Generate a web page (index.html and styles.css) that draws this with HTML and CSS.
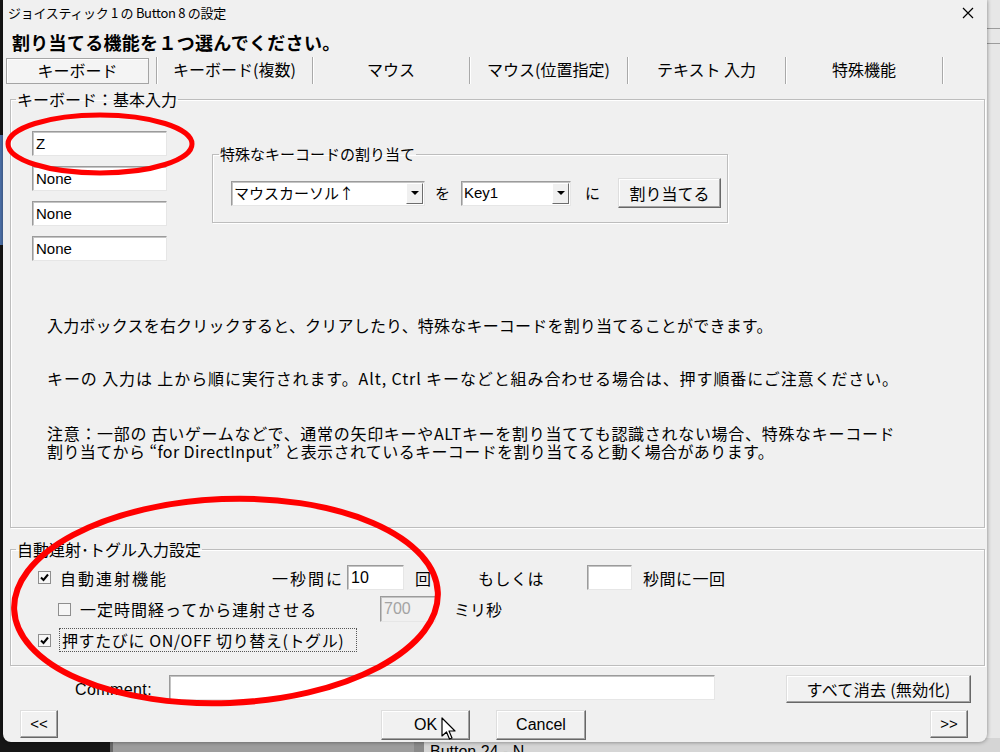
FILE: index.html
```html
<!DOCTYPE html>
<html lang="ja">
<head>
<meta charset="utf-8">
<title>ジョイスティック 1 の Button 8 の設定</title>
<link rel="stylesheet" href="styles.css">
</head>
<body>
<div class="desktop">
  <div class="bg-blue"></div>
  <div class="bg-right"><div class="bg-line l1"></div><div class="bg-line l2"></div></div>
  <div class="bg-bottom"></div>
  <div class="bg-win2"><span>Button 24 - N</span></div>

  <div class="dialog">
    <div class="titlebar">
      <span class="title">ジョイスティック 1 の Button 8 の設定</span>
      <svg class="close" width="12" height="12" viewBox="0 0 12 12"><path d="M1 1 L11 11 M11 1 L1 11" stroke="#000" stroke-width="1.2" fill="none"/></svg>
    </div>
    <h1 class="heading">割り当てる機能を１つ選んでください。</h1>
    <div class="tabs">
      <div class="tab active"><span class="tab-box">キーボード</span></div>
      <div class="tab">キーボード(複数)</div>
      <div class="tab">マウス</div>
      <div class="tab">マウス(位置指定)</div>
      <div class="tab">テキスト 入力</div>
      <div class="tab">特殊機能</div>
    </div>

    <fieldset class="group basic">
      <legend>キーボード：基本入力</legend>
      <div class="basic-inner">
        <div class="basic-top">
          <div class="keys">
            <div class="textbox">Z</div>
            <div class="textbox">None</div>
            <div class="textbox">None</div>
            <div class="textbox">None</div>
          </div>
          <fieldset class="group special">
            <legend>特殊なキーコードの割り当て</legend>
            <div class="special-row">
              <div class="combo combo-wide"><span>マウスカーソル↑</span><span class="drop"><i></i></span></div>
              <span class="word w-wo">を</span>
              <div class="combo combo-narrow"><span>Key1</span><span class="drop"><i></i></span></div>
              <span class="word w-ni">に</span>
              <div class="button btn-assign">割り当てる</div>
            </div>
          </fieldset>
        </div>
        <div class="notes">
          <p class="note n1">入力ボックスを右クリックすると、クリアしたり、特殊なキーコードを割り当てることができます。</p>
          <p class="note n2">キーの 入力は 上から順に実行されます。Alt, Ctrl キーなどと組み合わせる場合は、押す順番にご注意ください。</p>
          <p class="note n3"><span class="n3a">注意：一部の 古いゲームなどで、通常の矢印キーやALTキーを割り当てても認識されない場合、特殊なキーコード</span><span class="n3b">割り当てから “for DirectInput” と表示されているキーコードを割り当てると動く場合があります。</span></p>
        </div>
      </div>
    </fieldset>

    <fieldset class="group auto">
      <legend>自動連射･トグル入力設定</legend>
      <div class="auto-inner">
        <div class="row r1">
          <span class="check on"><svg width="11" height="11" viewBox="0 0 11 11"><path d="M2 5.5 L4.5 8 L9 2.5" stroke="#000" stroke-width="2" fill="none"/></svg></span>
          <span class="lbl lbl-auto">自動連射機能</span>
          <span class="lbl lbl-persec">一秒間に</span>
          <div class="textbox tb-rate">10</div>
          <span class="lbl lbl-kai">回</span>
          <span class="lbl lbl-or">もしくは</span>
          <div class="textbox tb-sec"></div>
          <span class="lbl lbl-once">秒間に一回</span>
        </div>
        <div class="row r2">
          <span class="check"></span>
          <span class="lbl lbl-delay">一定時間経ってから連射させる</span>
          <div class="textbox tb-ms disabled">700</div>
          <span class="lbl lbl-ms">ミリ秒</span>
        </div>
        <div class="row r3">
          <span class="check on"><svg width="11" height="11" viewBox="0 0 11 11"><path d="M2 5.5 L4.5 8 L9 2.5" stroke="#000" stroke-width="2" fill="none"/></svg></span>
          <span class="lbl lbl-toggle">押すたびに ON/OFF 切り替え(トグル)</span>
        </div>
      </div>
    </fieldset>

    <div class="comment-row">
      <span class="comment-label">Comment:</span>
      <div class="textbox tb-comment"></div>
      <div class="button btn-clear">すべて消去 (無効化)</div>
    </div>
    <div class="button-row">
      <div class="button btn-prev">&lt;&lt;</div>
      <div class="button btn-ok">OK</div>
      <div class="button btn-cancel">Cancel</div>
      <div class="button btn-next">&gt;&gt;</div>
    </div>
  </div>

  <svg class="annot" width="1000" height="752" viewBox="0 0 1000 752">
    <ellipse cx="100" cy="144" rx="92" ry="29" fill="none" stroke="#f00" stroke-width="5"/>
    <ellipse cx="226" cy="601" rx="212" ry="102" fill="none" stroke="#f00" stroke-width="6" transform="rotate(-2.3 226 601)"/>
  </svg>
  <svg class="cursor" width="16" height="26" viewBox="0 0 16 26">
    <path d="M1 1 L1 19 L5.5 15 L8.5 22 L11 21 L8 14 L14 14 Z" fill="#fff" stroke="#000" stroke-width="1.2" stroke-linejoin="round"/>
  </svg>
</div>
</body>
</html>
```

FILE: styles.css
```css
html, body {
  margin: 0;
  padding: 0;
}
body {
  background: #161616;
  font-family: "Noto Sans CJK JP", "Noto Sans", sans-serif;
  color: #000;
  overflow: hidden;
}
.desktop {
  position: relative;
  width: 1000px;
  height: 752px;
  overflow: hidden;
}

/* background windows */
.bg-blue {
  position: absolute;
  left: 0;
  top: 135px;
  width: 4px;
  height: 110px;
  background: #4f74ad;
}
.bg-right {
  position: absolute;
  left: 985px;
  top: 0;
  width: 15px;
  height: 752px;
  background: #e7e7e7;
}
.bg-line {
  position: absolute;
  left: 0;
  right: 0;
  height: 1px;
  background: #9c9c9c;
}
.bg-line.l1 { top: 28px; }
.bg-line.l2 { top: 43px; }
.bg-bottom {
  position: absolute;
  left: 110px;
  top: 738px;
  width: 890px;
  height: 14px;
  background: #9d9d9d;
  border-left: 3px solid #6a6a6a;
}
.bg-win2 {
  position: absolute;
  left: 414px;
  top: 738px;
  width: 586px;
  height: 14px;
  background: #d5d5d5;
  border-left: 10px solid #8a8a8a;
  overflow: hidden;
}
.bg-win2 span {
  position: absolute;
  left: 6px;
  top: 5px;
  font-family: "Liberation Sans", sans-serif;
  font-size: 16px;
  line-height: 18px;
  white-space: nowrap;
}

/* dialog */
.dialog {
  position: absolute;
  left: 3px;
  top: 0;
  width: 984px;
  height: 742px;
  background: #f0f0f0;
  border-radius: 0 0 8px 8px;
  box-shadow: 0 0 4px rgba(0, 0, 0, 0.45);
  display: flex;
  flex-direction: column;
  font-size: 15px;
}
.titlebar {
  height: 26px;
  display: flex;
  align-items: center;
  justify-content: space-between;
  padding: 0 13px 0 5px;
  flex: none;
}
.title {
  font-size: 13px;
  line-height: 16px;
  letter-spacing: -0.3px;
}
.heading {
  margin: 6px 0 0 9px;
  font-size: 18px;
  line-height: 20px;
  font-weight: bold;
  height: 20px;
  letter-spacing: 0.3px;
  flex: none;
}

/* tabs */
.tabs {
  display: flex;
  height: 27px;
  margin-top: 5px;
  padding-left: 3px;
  flex: none;
}
.tab {
  flex: none;
  display: flex;
  align-items: center;
  justify-content: center;
  font-size: 16px;
  line-height: 20px;
  padding-bottom: 3px;
  border-right: 1px solid #a9a9a9;
  box-shadow: 1px 0 0 #fff;
  box-sizing: border-box;
}
.tab:nth-child(1) { width: 151px; justify-content: flex-start; padding-bottom: 0; }
.tab:nth-child(2) { width: 156px; }
.tab:nth-child(3) { width: 157px; }
.tab:nth-child(4) { width: 158px; }
.tab:nth-child(5) { width: 158px; }
.tab:nth-child(6) { width: 157px; }
.tab-box {
  width: 143px;
  height: 26px;
  box-sizing: border-box;
  display: flex;
  align-items: center;
  justify-content: center;
  padding-bottom: 2px;
  border: 1px solid #a4a4a4;
  box-shadow: inset 1px 1px 0 #fff;
  background: #f4f4f4;
}

/* group boxes */
.group {
  margin: 0;
  padding: 0;
  border: 1px solid #bdbdbd;
  box-shadow: inset 1px 1px 0 #fff, 1px 1px 0 #fff;
  box-sizing: border-box;
  min-width: 0;
}
.group legend {
  padding: 0 1px;
  margin-left: 5px;
  font-size: 16px;
  line-height: 18px;
}
.basic {
  margin: 6px 0 0 7px;
  width: 975px;
  height: 438px;
  flex: none;
}
.basic-inner {
  padding: 23px 0 0 21px;
}
.basic-top {
  display: flex;
  align-items: flex-start;
  gap: 45px;
}
.keys {
  display: flex;
  flex-direction: column;
  gap: 10px;
}
.textbox {
  width: 135px;
  height: 25px;
  box-sizing: border-box;
  background: #fff;
  border: 1px solid;
  border-color: #9b9b9b #e6e6e6 #e6e6e6 #9b9b9b;
  box-shadow: inset 1px 1px 0 #c4c4c4;
  font-family: "Liberation Sans", "Noto Sans CJK JP", sans-serif;
  font-size: 15px;
  line-height: 23px;
  padding-left: 3px;
  white-space: nowrap;
  overflow: hidden;
}
.special {
  width: 516px;
  height: 78px;
  margin-top: 14px;
}
.special legend {
  margin-left: 6px;
  font-size: 15px;
}
.special-row {
  display: flex;
  align-items: center;
  padding: 15px 0 0 18px;
}
.combo {
  height: 25px;
  box-sizing: border-box;
  background: #fff;
  border: 1px solid;
  border-color: #9b9b9b #e6e6e6 #e6e6e6 #9b9b9b;
  box-shadow: inset 1px 1px 0 #c4c4c4;
  display: flex;
  align-items: center;
  justify-content: space-between;
  padding-left: 2px;
  font-size: 15px;
  line-height: 20px;
}
.combo-wide { width: 194px; }
.combo-narrow {
  width: 110px;
  font-family: "Liberation Sans", sans-serif;
}
.drop {
  width: 17px;
  height: 21px;
  margin-right: 1px;
  box-sizing: border-box;
  background: #f0f0f0;
  border: 1px solid;
  border-color: #fff #6d6d6d #6d6d6d #fff;
  display: flex;
  align-items: center;
  justify-content: center;
}
.drop i {
  width: 0;
  height: 0;
  border-left: 4px solid transparent;
  border-right: 4px solid transparent;
  border-top: 4px solid #000;
}
.word {
  font-size: 15px;
  line-height: 20px;
}
.w-wo { margin: 0 11px 0 10px; }
.w-ni { margin: 0 18px 0 14px; }

.button {
  box-sizing: border-box;
  background: #f1f1f1;
  border: 1px solid;
  border-color: #dedede #676767 #676767 #dedede;
  box-shadow: inset -1px -1px 0 #a2a2a2, inset 1px 1px 0 #fff;
  display: flex;
  align-items: center;
  justify-content: center;
  font-size: 16px;
  line-height: 20px;
  flex: none;
}
.btn-assign {
  width: 103px;
  height: 30px;
}

.notes {
  padding-left: 15px;
  margin-top: 55px;
}
.note {
  margin: 0;
  font-size: 16px;
  line-height: 18px;
  white-space: nowrap;
}
.n1 { letter-spacing: 0.2px; }
.n2 { margin-top: 35px; letter-spacing: 0.9px; }
.n3 { margin-top: 37px; }
.n3a, .n3b {
  display: block;
  height: 18px;
  overflow: visible;
}
.n3a { letter-spacing: 0.7px; }
.n3b { letter-spacing: 0.4px; }

/* auto fire */
.auto {
  margin: 12px 0 0 7px;
  width: 975px;
  height: 126px;
  flex: none;
}
.auto-inner {
  padding: 7px 0 0 27px;
  display: flex;
  flex-direction: column;
  gap: 6px;
}
.row {
  display: flex;
  align-items: center;
  height: 25px;
}
.r2 { height: 26px; }
.r3 { height: 24px; }
.check {
  width: 13px;
  height: 13px;
  box-sizing: border-box;
  border: 1px solid #8e8e8e;
  background: #f6f6f6;
  display: flex;
  align-items: center;
  justify-content: center;
  flex: none;
}
.lbl {
  font-size: 16px;
  line-height: 20px;
  white-space: nowrap;
  flex: none;
}
.lbl-auto { margin-left: 9px; width: 212px; letter-spacing: 2px; }
.lbl-persec { width: 75px; letter-spacing: 2px; }
.tb-rate { width: 57px; font-size: 16px; }
.lbl-kai { margin-left: 11px; width: 63px; }
.lbl-or { width: 109px; letter-spacing: 0.5px; }
.tb-sec { width: 45px; }
.lbl-once { margin-left: 11px; letter-spacing: 0.5px; }
.r2 .check { margin-left: 20px; }
.lbl-delay { margin-left: 9px; width: 300px; letter-spacing: 1px; }
.tb-ms {
  width: 56px;
  height: 26px;
  background: #f0f0f0;
  color: #a3a3a3;
  font-size: 16px;
}
.lbl-ms { margin-left: 18px; }
.lbl-toggle {
  margin-left: 8px;
  width: 298px;
  height: 24px;
  box-sizing: border-box;
  border: 1px dotted #555;
  padding-left: 2px;
  line-height: 22px;
  letter-spacing: 0.6px;
}

/* bottom rows */
.comment-row {
  display: flex;
  align-items: flex-start;
  margin-top: 9px;
  height: 28px;
  flex: none;
}
.comment-label {
  margin-left: 72px;
  width: 81px;
  font-family: "Liberation Sans", sans-serif;
  font-size: 16px;
  line-height: 20px;
  padding-top: 5px;
  letter-spacing: 0.4px;
}
.tb-comment {
  margin-left: 13px;
  width: 546px;
}
.btn-clear {
  margin-left: 71px;
  width: 185px;
  height: 28px;
  letter-spacing: 0.3px;
}
.button-row {
  display: flex;
  margin-top: 7px;
  height: 30px;
  flex: none;
}
.btn-prev, .btn-next {
  width: 38px;
  height: 28px;
  font-family: "Liberation Sans", sans-serif;
  font-size: 15px;
}
.btn-prev { margin-left: 17px; }
.btn-ok {
  margin-left: 323px;
  width: 89px;
  height: 30px;
  font-family: "Liberation Sans", sans-serif;
}
.btn-cancel {
  margin-left: 26px;
  width: 90px;
  height: 30px;
  font-family: "Liberation Sans", sans-serif;
}
.btn-next { margin-left: 344px; }

/* overlays */
.annot {
  position: absolute;
  left: 0;
  top: 0;
  pointer-events: none;
}
.cursor {
  position: absolute;
  left: 441px;
  top: 717px;
}
```
